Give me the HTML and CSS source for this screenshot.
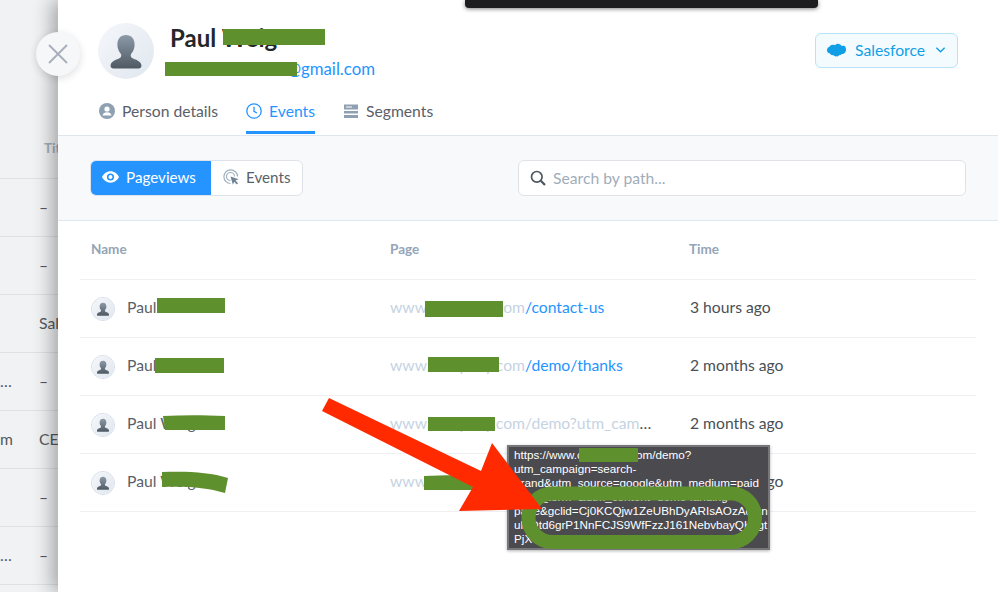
FILE: index.html
```html
<!DOCTYPE html>
<html lang="en">
<head>
<meta charset="utf-8">
<title>Person events</title>
<link rel="stylesheet" href="styles.css">
</head>
<body>
<svg class="defs" width="0" height="0" aria-hidden="true">
  <defs>
    <linearGradient id="bust" x1="0" y1="0" x2="0" y2="1"><stop offset="0" stop-color="#8c9aa8"/><stop offset="1" stop-color="#4f5963"/></linearGradient>
    <linearGradient id="disc" x1="0" y1="0" x2="1" y2="1"><stop offset="0" stop-color="#f5f7fa"/><stop offset="1" stop-color="#e0e7ef"/></linearGradient>
    <symbol id="person" viewBox="0 0 56 56">
      <circle cx="28" cy="28" r="28" fill="url(#disc)"/>
      <path fill="url(#bust)" d="M28 12c-5.600 0-8.600 4-8.600 9.400 0 3.600 1.300 6.900 3.200 9 .9 1 .9 3-.1 4-2.500 2-9.300 3-9.900 7.600-.3 2.200.8 3.400 2.900 3.400h25c2.100 0 3.200-1.200 2.900-3.400-.6-4.600-7.400-5.600-9.900-7.600-1-1-1-3-.1-4 1.900-2.100 3.200-5.400 3.200-9C36.600 16 33.600 12 28 12z"/>
    </symbol>
  </defs>
</svg>
<div class="page">
  <aside class="backdrop">
    <div class="back-head"><span class="back-col1"></span><span class="back-col2 back-title">Title</span></div>
    <div class="back-row"><span class="back-col1"></span><span class="back-col2">–</span></div>
    <div class="back-row"><span class="back-col1"></span><span class="back-col2">–</span></div>
    <div class="back-row"><span class="back-col1"></span><span class="back-col2">Sales</span></div>
    <div class="back-row"><span class="back-col1 back-end">…</span><span class="back-col2">–</span></div>
    <div class="back-row"><span class="back-col1 back-end">m</span><span class="back-col2">CEO</span></div>
    <div class="back-row"><span class="back-col1"></span><span class="back-col2">–</span></div>
    <div class="back-row"><span class="back-col1 back-end">…</span><span class="back-col2">–</span></div>
  </aside>
  <main class="panel">
    <header class="head">
      <div class="identity">
        <svg class="avatar-lg"><use href="#person"/></svg>
        <div class="who">
          <div class="name">Paul Weig</div>
          <div class="email">redacted.name@gmail.com</div>
        </div>
        <button class="sf">
          <svg class="sf-cloud" viewBox="0 0 20 14"><path fill="#109fe6" d="M8.200 2C9 1 10.200.4 11.500.4c1.700 0 3.200 1 3.900 2.400.6-.3 1.200-.4 1.800-.4 2.400 0 2.800 2.200 2.800 4.400s-1.200 4.400-3.600 4.400h-1c-.6 1-1.700 1.400-2.800 1.200-.6 1-1.700 1.500-2.800 1.300-1.100.2-2.200-.3-2.800-1.200-2 .3-3.500-.6-4-2C.8 10.200 0 8.800 0 7.200c0-1.800 1-3.200 2.600-3.700C3.200 1.800 6.400.8 8.200 2z"/></svg>
          <span>Salesforce</span>
          <svg class="sf-chev" viewBox="0 0 12 8"><path d="M1.500 1.500 6 6l4.500-4.500" fill="none" stroke="#109fe6" stroke-width="1.500"/></svg>
        </button>
      </div>
      <nav class="tabs">
        <a class="tab">
          <svg class="ico" viewBox="0 0 16 16"><circle cx="8" cy="8" r="8" fill="#8fa0b2"/><circle cx="8" cy="6" r="2.600" fill="#fff"/><path fill="#fff" d="M3.500 12.500c.4-2.400 2.300-3.300 4.500-3.300s4.100.9 4.500 3.300z"/></svg>
          Person details
        </a>
        <a class="tab tab-on">
          <svg class="ico" viewBox="0 0 16 16"><circle cx="8" cy="8" r="7.200" fill="none" stroke="#2594ff" stroke-width="1.300"/><path d="M8 3.800V8.400l3 1.600" fill="none" stroke="#2594ff" stroke-width="1.300"/></svg>
          Events
        </a>
        <a class="tab">
          <svg class="ico" viewBox="0 0 16 16"><path fill="#8fa0b2" d="M1 1.500h14v5H1zM1 8h14v2.500H1zM1 12h14v3H1z"/><path fill="#fff" d="M3 3.500h6v1H3z"/></svg>
          Segments
        </a>
      </nav>
    </header>
    <section class="toolbar">
      <div class="seg">
        <span class="seg-btn seg-on">
          <svg class="ico-eye" viewBox="0 0 18 12"><path fill="#fff" d="M9 0C5 0 1.800 2.500 0 6c1.800 3.500 5 6 9 6s7.200-2.500 9-6c-1.800-3.500-5-6-9-6z"/><circle cx="9" cy="6" r="3.800" fill="#2594ff"/><circle cx="9" cy="6" r="2.100" fill="#fff"/></svg>
          Pageviews
        </span>
        <span class="seg-btn">
          <svg class="ico" viewBox="0 0 16 16"><path d="M7.500 14.500a6.800 6.800 0 1 1 7-7" fill="none" stroke="#9fb0c0" stroke-width="1.200"/><path d="M7.500 11.500a4 4 0 1 1 4-4" fill="none" stroke="#9fb0c0" stroke-width="1.200"/><path fill="#6f8194" d="M7.500 7.500l8 2.800-3 1.300 2.500 2.700-1.200 1.200-2.600-2.700-1.300 3z"/></svg>
          Events
        </span>
      </div>
      <label class="search">
        <svg class="ico" viewBox="0 0 16 16"><circle cx="6.800" cy="6.800" r="5.300" fill="none" stroke="#4c5660" stroke-width="1.700"/><path d="M10.800 10.800 15 15" stroke="#4c5660" stroke-width="2.200"/></svg>
        <span class="placeholder">Search by path...</span>
      </label>
    </section>
    <section class="table">
      <div class="tr th"><span>Name</span><span>Page</span><span>Time</span></div>
      <div class="tr">
        <span class="cell-name"><svg class="avatar"><use href="#person"/></svg>Paul</span>
        <span class="cell-page"><span class="dom">www.company.com</span><span class="path">/contact-us</span></span>
        <span class="cell-time">3 hours ago</span>
      </div>
      <div class="tr">
        <span class="cell-name"><svg class="avatar"><use href="#person"/></svg>Paul</span>
        <span class="cell-page"><span class="dom">www.company.com</span><span class="path">/demo/thanks</span></span>
        <span class="cell-time">2 months ago</span>
      </div>
      <div class="tr">
        <span class="cell-name"><svg class="avatar"><use href="#person"/></svg>Paul Weig</span>
        <span class="cell-page"><span class="dom">www.company.com</span><span class="faded">/demo?utm_campaign=search-brand</span></span>
        <span class="cell-time">2 months ago</span>
      </div>
      <div class="tr">
        <span class="cell-name"><svg class="avatar"><use href="#person"/></svg>Paul Weig</span>
        <span class="cell-page"><span class="dom">www.company.com</span><span class="faded">/demo?utm_campaign=search-brand</span></span>
        <span class="cell-time">2 months ago</span>
      </div>
    </section>
  </main>
</div>

<div class="topbar"></div>
<button class="close" aria-label="Close">
  <svg viewBox="0 0 20 20" width="20" height="20"><path d="M1 1l18 18M19 1 1 19" stroke="#a6aeb9" stroke-width="1.800" fill="none"/></svg>
</button>
<div class="tooltip">
  <span class="tip-line">https://www.<span class="tip-dom">company.c</span>om/demo?</span>
  <span class="tip-line">utm_campaign=search-</span>
  <span class="tip-line">brand&amp;utm_source=google&amp;utm_medium=paid</span>
  <span class="tip-line">&amp;utm_term=&amp;utm_content=demo-landing-</span>
  <span class="tip-line">page&amp;gclid=Cj0KCQjw1ZeUBhDyARIsAOzAqQnn</span>
  <span class="tip-line">ulbQtd6grP1NnFCJS9WfFzzJ161NebvbayQKxgt</span>
  <span class="tip-line">PjX</span>
</div>
<svg class="marks" viewBox="0 0 998 592" aria-hidden="true">
  <g fill="#5f902e">
    <path d="M223 29h102v16H223z"/>
    <path d="M165 62h132v14H165z"/>
    <path d="M157 298h68v15h-68z"/>
    <path d="M155 358h69v15h-69z"/>
    <path d="M163 416c20-1 40-1 62 0v14h-60z"/>
    <path d="M162 472c24-1 48 0 66 6l-3 15c-20-6-40-7-63-6z"/>
    <path d="M425 301h78v16h-78z"/>
    <path d="M428 357h71v15h-71z"/>
    <path d="M428 417h67v14h-67z"/>
    <path d="M424 476c20-1 40-1 66 0v14h-66z"/>
    <path d="M579 448h59v14h-59z"/>
  </g>
  <rect x="528.500" y="493.500" width="226.500" height="48.500" rx="24" fill="none" stroke="#5f902e" stroke-width="14"/>
  <path fill="#ff2a00" d="M329 398 481 471 492 443 542 509 459 511 473 487 322 411z"/>
</svg>
</body>
</html>
```
FILE: styles.css
```css
* { box-sizing: border-box; }
html, body { margin: 0; height: 100%; }
body {
  position: relative;
  width: 998px;
  height: 592px;
  overflow: hidden;
  background: #fff;
  font-family: Lato, "Open Sans", sans-serif;
  font-size: 15.7px;
  color: #4a4f55;
}
.defs { position: absolute; }
.page { display: flex; height: 592px; }

.backdrop {
  flex: 0 0 58px;
  overflow: hidden;
  background: #f1f2f4;
  padding-top: 121px;
}
.back-head, .back-row {
  display: flex;
  height: 58px;
  align-items: center;
  border-bottom: 1px solid #dfe1e4;
  white-space: nowrap;
  padding-bottom: 2px;
}
.back-col1 { flex: 0 0 39px; overflow: hidden; }
.back-end { color: #55595e; }
.back-col2 { color: #55595e; }
.back-title { font-size: 13.5px; font-weight: 700; color: #a2b0bf; margin-left: 5px; padding-bottom: 2px; }

.panel {
  flex: 1;
  min-width: 0;
  background: #fff;
  box-shadow: -6px 0 18px rgba(0, 0, 0, .32);
  position: relative;
}
.head { height: 136px; border-bottom: 1px solid #dfe6ee; padding: 23px 40px 0; display: flex; flex-direction: column; }
.identity { display: flex; align-items: flex-start; }
.avatar-lg { width: 56px; height: 56px; flex: none; }
.who { margin-left: 11px; }
.name { font-size: 24px; font-weight: 700; color: #24272b; line-height: 30px; margin-left: 5px; }
.email { font-size: 16.8px; color: #2594ff; line-height: 20px; margin-top: 6px; width: 210px; text-align: right; white-space: nowrap; direction: rtl; overflow: hidden; }
.sf {
  margin-left: auto;
  margin-top: 10px;
  height: 35px;
  width: 143px;
  display: flex;
  align-items: center;
  gap: 9px;
  padding: 0 12px 1px 11px;
  border: 1px solid #b5e3fa;
  border-radius: 6px;
  background: #f4fbff;
  color: #109fe6;
  font: inherit;
}
.sf-cloud { width: 19px; height: 14px; flex: none; }
.sf-chev { width: 11px; height: 8px; flex: none; margin-left: 1px; }
.tabs { display: flex; gap: 28px; margin-top: 11px; padding-left: 1px; }
.tab { display: flex; align-items: center; gap: 7px; height: 44px; padding-bottom: 2px; color: #5a6068; position: relative; }
.tab-on { color: #2594ff; }
.tab-on::after { content: ""; position: absolute; left: 0; right: 0; bottom: 0; height: 3px; background: #2594ff; }
.ico { width: 16px; height: 16px; flex: none; }

.toolbar {
  height: 85px;
  background: #f8f9fb;
  border-bottom: 1px solid #dfe6ee;
  padding: 24px 32px 0;
  display: flex;
  justify-content: space-between;
  align-items: flex-start;
}
.seg { display: flex; height: 36px; width: 213px; border: 1px solid #dfe3e8; border-radius: 6px; background: #fff; overflow: hidden; font-size: 15.2px; }
.seg-btn { display: flex; align-items: center; gap: 7px; padding-left: 12px; color: #5a6068; flex: 1; padding-bottom: 3px; }
.seg-on { flex: 0 0 121px; margin: -1px 0 -1px -1px; background: #2594ff; color: #fff; padding-left: 12px; }
.ico-eye { width: 17px; height: 12px; flex: none; }
.search {
  width: 448px;
  height: 36px;
  display: flex;
  align-items: center;
  gap: 7px;
  padding: 0 11px 1px;
  background: #fff;
  border: 1px solid #dfe3e8;
  border-radius: 6px;
}
.placeholder { color: #9fadbb; }

.table { margin: 1px 22px 0; }
.tr {
  display: grid;
  grid-template-columns: 299px 299px 1fr;
  height: 58px;
  align-items: center;
  padding: 0 0 3px 11px;
  border-bottom: 1px solid #eef0f3;
  color: #4a4f55;
}
.th { font-size: 13.5px; font-weight: 700; color: #93a5b7; padding-bottom: 3px; }
.cell-name { display: flex; align-items: center; gap: 12px; color: #5a6068; }
.cell-time { margin-left: 1px; }
.avatar { width: 24px; height: 24px; flex: none; margin-top: 3px; border: 1px solid #d5deea; border-radius: 50%; }
.cell-page { display: block; max-width: 267px; overflow: hidden; white-space: nowrap; text-overflow: ellipsis; color: #4a4f55; }
.dom { color: #c5d3e3; }
.path { color: #2594ff; }
.faded { color: #c5d3e3; }

.topbar {
  position: absolute;
  left: 465px;
  top: 0;
  width: 353px;
  height: 8px;
  background: #1d1d20;
  border-radius: 0 0 4px 4px;
  box-shadow: 0 1px 4px rgba(0, 0, 0, .5);
}
.close {
  position: absolute;
  left: 36px;
  top: 32px;
  width: 44px;
  height: 44px;
  padding: 0;
  border: 0;
  border-radius: 50%;
  background: #f6f7f9;
  box-shadow: 0 2px 8px rgba(0, 0, 0, .14);
  display: flex;
  align-items: center;
  justify-content: center;
}
.tooltip {
  position: absolute;
  left: 507px;
  top: 445px;
  width: 263px;
  height: 105px;
  padding: 1px 5px;
  background: #4b4a4f;
  border: 2px solid #77767b;
  box-shadow: 0 1px 3px rgba(0, 0, 0, .3);
  color: #fff;
  font-family: "Liberation Sans", Arial, sans-serif;
  font-size: 11.7px;
  line-height: 14px;
  overflow: hidden;
}
.tip-line { display: block; white-space: nowrap; }
.tip-dom { display: inline-block; width: 59px; overflow: hidden; vertical-align: bottom; }
.marks { position: absolute; left: 0; top: 0; width: 998px; height: 592px; pointer-events: none; }
```
